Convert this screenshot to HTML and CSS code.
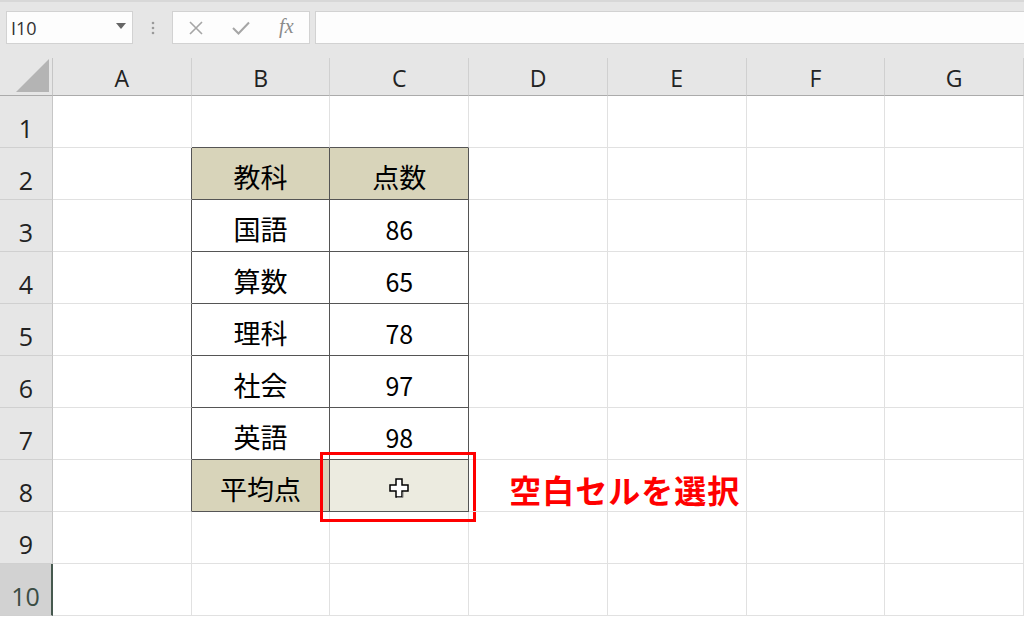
FILE: index.html
```html
<!DOCTYPE html>
<html lang="ja">
<head>
    <meta charset="UTF-8">
    <title>平均点</title>
    <link rel="stylesheet" href="styles.css">
</head>
<body>

<div class="topbar">
    <div class="namebox">
        <span>I10</span>
        <svg class="drop" width="10" height="6" viewBox="0 0 10 6"><path d="M0 0H10L5 6Z" fill="#666"/></svg>
    </div>
    <div class="grip">
        <svg width="4" height="14" viewBox="0 0 4 14"><circle cx="2" cy="2" r="1.3" fill="#9a9a9a"/><circle cx="2" cy="7" r="1.3" fill="#9a9a9a"/><circle cx="2" cy="12" r="1.3" fill="#9a9a9a"/></svg>
    </div>
    <div class="fxbox">
        <span class="fxbtn"><svg width="14" height="14" viewBox="0 0 14 14"><path d="M1 1L13 13M13 1L1 13" stroke="#a6a6a6" stroke-width="1.6"/></svg></span>
        <span class="fxbtn"><svg width="18" height="14" viewBox="0 0 18 14"><path d="M1 7L6.5 12.5L17 1.5" stroke="#a6a6a6" stroke-width="2" fill="none"/></svg></span>
        <span class="fxbtn fx">fx</span>
    </div>
    <div class="formula"></div>
</div>

<div class="sheet">
    <div class="corner"><div class="tri"></div></div>
    <div class="colhead">A</div>
    <div class="colhead">B</div>
    <div class="colhead">C</div>
    <div class="colhead">D</div>
    <div class="colhead">E</div>
    <div class="colhead">F</div>
    <div class="colhead">G</div>

    <div class="rowhead">1</div>
    <div class="cell"></div>
    <div class="cell edge-b"></div>
    <div class="cell edge-b"></div>
    <div class="cell"></div><div class="cell"></div><div class="cell"></div><div class="cell"></div>

    <div class="rowhead">2</div>
    <div class="cell edge-r"></div>
    <div class="cell tcell head">教科</div>
    <div class="cell tcell head">点数</div>
    <div class="cell"></div><div class="cell"></div><div class="cell"></div><div class="cell"></div>

    <div class="rowhead">3</div>
    <div class="cell edge-r"></div>
    <div class="cell tcell">国語</div>
    <div class="cell tcell num">86</div>
    <div class="cell"></div><div class="cell"></div><div class="cell"></div><div class="cell"></div>

    <div class="rowhead">4</div>
    <div class="cell edge-r"></div>
    <div class="cell tcell">算数</div>
    <div class="cell tcell num">65</div>
    <div class="cell"></div><div class="cell"></div><div class="cell"></div><div class="cell"></div>

    <div class="rowhead">5</div>
    <div class="cell edge-r"></div>
    <div class="cell tcell">理科</div>
    <div class="cell tcell num">78</div>
    <div class="cell"></div><div class="cell"></div><div class="cell"></div><div class="cell"></div>

    <div class="rowhead">6</div>
    <div class="cell edge-r"></div>
    <div class="cell tcell">社会</div>
    <div class="cell tcell num">97</div>
    <div class="cell"></div><div class="cell"></div><div class="cell"></div><div class="cell"></div>

    <div class="rowhead">7</div>
    <div class="cell edge-r"></div>
    <div class="cell tcell">英語</div>
    <div class="cell tcell num">98</div>
    <div class="cell"></div><div class="cell"></div><div class="cell"></div><div class="cell"></div>

    <div class="rowhead">8</div>
    <div class="cell edge-r"></div>
    <div class="cell tcell head">平均点</div>
    <div class="cell tcell picked">
        <svg class="pointer" width="20" height="20" viewBox="0 0 20 20"><path d="M7 1H13V7H19V13H13V19H7V13H1V7H7Z" fill="#fff" stroke="#000" stroke-width="1.5"/><path d="M8 19.5H14V14" stroke="#888" stroke-width="1" fill="none"/></svg>
        <div class="mark"></div>
    </div>
    <div class="cell note-cell"><span class="note">空白セルを選択</span></div>
    <div class="cell"></div><div class="cell"></div><div class="cell"></div>

    <div class="rowhead">9</div>
    <div class="cell"></div><div class="cell"></div><div class="cell"></div><div class="cell"></div><div class="cell"></div><div class="cell"></div><div class="cell"></div>

    <div class="rowhead selected">10</div>
    <div class="cell"></div><div class="cell"></div><div class="cell"></div><div class="cell"></div><div class="cell"></div><div class="cell"></div><div class="cell"></div>
</div>

</body>
</html>
```

FILE: styles.css
```css
body {
    margin: 0;
    width: 1024px;
    height: 617px;
    overflow: hidden;
    background-color: #fff;
    font-family: "Noto Sans CJK JP", "Noto Sans", sans-serif;
}
.topbar {
    height: 58px;
    box-sizing: border-box;
    background-color: #e6e6e6;
    border-top: 2px solid #d8d8d8;
    display: flex;
    align-items: flex-start;
    padding: 9px 0 0 6px;
}
.namebox {
    width: 127px;
    height: 33px;
    box-sizing: border-box;
    background-color: #fdfdfd;
    border: 1px solid #d2d2d2;
    display: flex;
    align-items: center;
    justify-content: space-between;
    padding: 0 6px 0 4px;
    font-family: "Open Sans", sans-serif;
    font-size: 18px;
    color: #333;
}
.drop {
    margin-top: -3px;
}
.grip {
    width: 39px;
    height: 33px;
    display: flex;
    align-items: center;
    justify-content: center;
}
.fxbox {
    width: 138px;
    height: 33px;
    box-sizing: border-box;
    background-color: #fdfdfd;
    border: 1px solid #d2d2d2;
    display: flex;
    align-items: center;
}
.fxbtn {
    width: 46px;
    display: flex;
    justify-content: center;
    align-items: center;
}
.fx {
    font-family: "Liberation Serif", serif;
    font-style: italic;
    font-size: 20px;
    color: #8a8a8a;
    margin-top: -3px;
}
.formula {
    flex: 1;
    height: 33px;
    margin-left: 5px;
    box-sizing: border-box;
    background-color: #fdfdfd;
    border: 1px solid #d2d2d2;
    border-right: none;
}
.sheet {
    display: grid;
    grid-template-columns: 53px repeat(7, 1fr);
    grid-template-rows: 38px repeat(10, 52px);
}
.corner {
    background-color: #e6e6e6;
    border-right: 1px solid #c6c6c6;
    border-bottom: 1px solid #ababab;
    position: relative;
}
.tri {
    position: absolute;
    right: 3px;
    bottom: 3px;
    width: 0;
    height: 0;
    border-left: 33px solid transparent;
    border-bottom: 33px solid #b4b4b4;
}
.colhead {
    background-color: #e6e6e6;
    border-right: 1px solid #d0d0d0;
    border-bottom: 1px solid #ababab;
    display: flex;
    justify-content: center;
    align-items: center;
    padding-top: 2px;
    font-family: "Open Sans", sans-serif;
    font-size: 23px;
    color: #222;
}
.rowhead {
    background-color: #e6e6e6;
    border-right: 1px solid #c6c6c6;
    border-bottom: 1px solid #d0d0d0;
    display: flex;
    justify-content: center;
    align-items: center;
    padding-top: 12px;
    font-family: "Open Sans", sans-serif;
    font-size: 25px;
    color: #222;
}
.rowhead.selected {
    background-color: #d2d2d2;
    border-right: 2px solid #46594f;
    color: #3b4d44;
}
.cell {
    border-right: 1px solid #e1e1e1;
    border-bottom: 1px solid #e1e1e1;
    display: flex;
    justify-content: center;
    align-items: center;
    padding-top: 6px;
    font-size: 27px;
    color: #000;
    min-width: 0;
}
.edge-r {
    border-right-color: #555;
}
.edge-b {
    border-bottom-color: #555;
}
.tcell {
    border-right-color: #555;
    border-bottom-color: #555;
}
.head {
    background-color: #d8d4ba;
}
.num {
    font-size: 25px;
}
.picked {
    background-color: #ecebe0;
    position: relative;
}
.pointer {
    margin-top: -2px;
}
.mark {
    position: absolute;
    left: -10px;
    right: -8px;
    top: -8px;
    bottom: -11px;
    border: 3px solid #ff0000;
    z-index: 2;
}
.note-cell {
    justify-content: flex-start;
    overflow: visible;
    position: relative;
    z-index: 3;
}
.note {
    white-space: nowrap;
    margin-left: 40px;
    font-size: 32px;
    font-weight: bold;
    color: #ff0000;
    letter-spacing: 1px;
}
```
